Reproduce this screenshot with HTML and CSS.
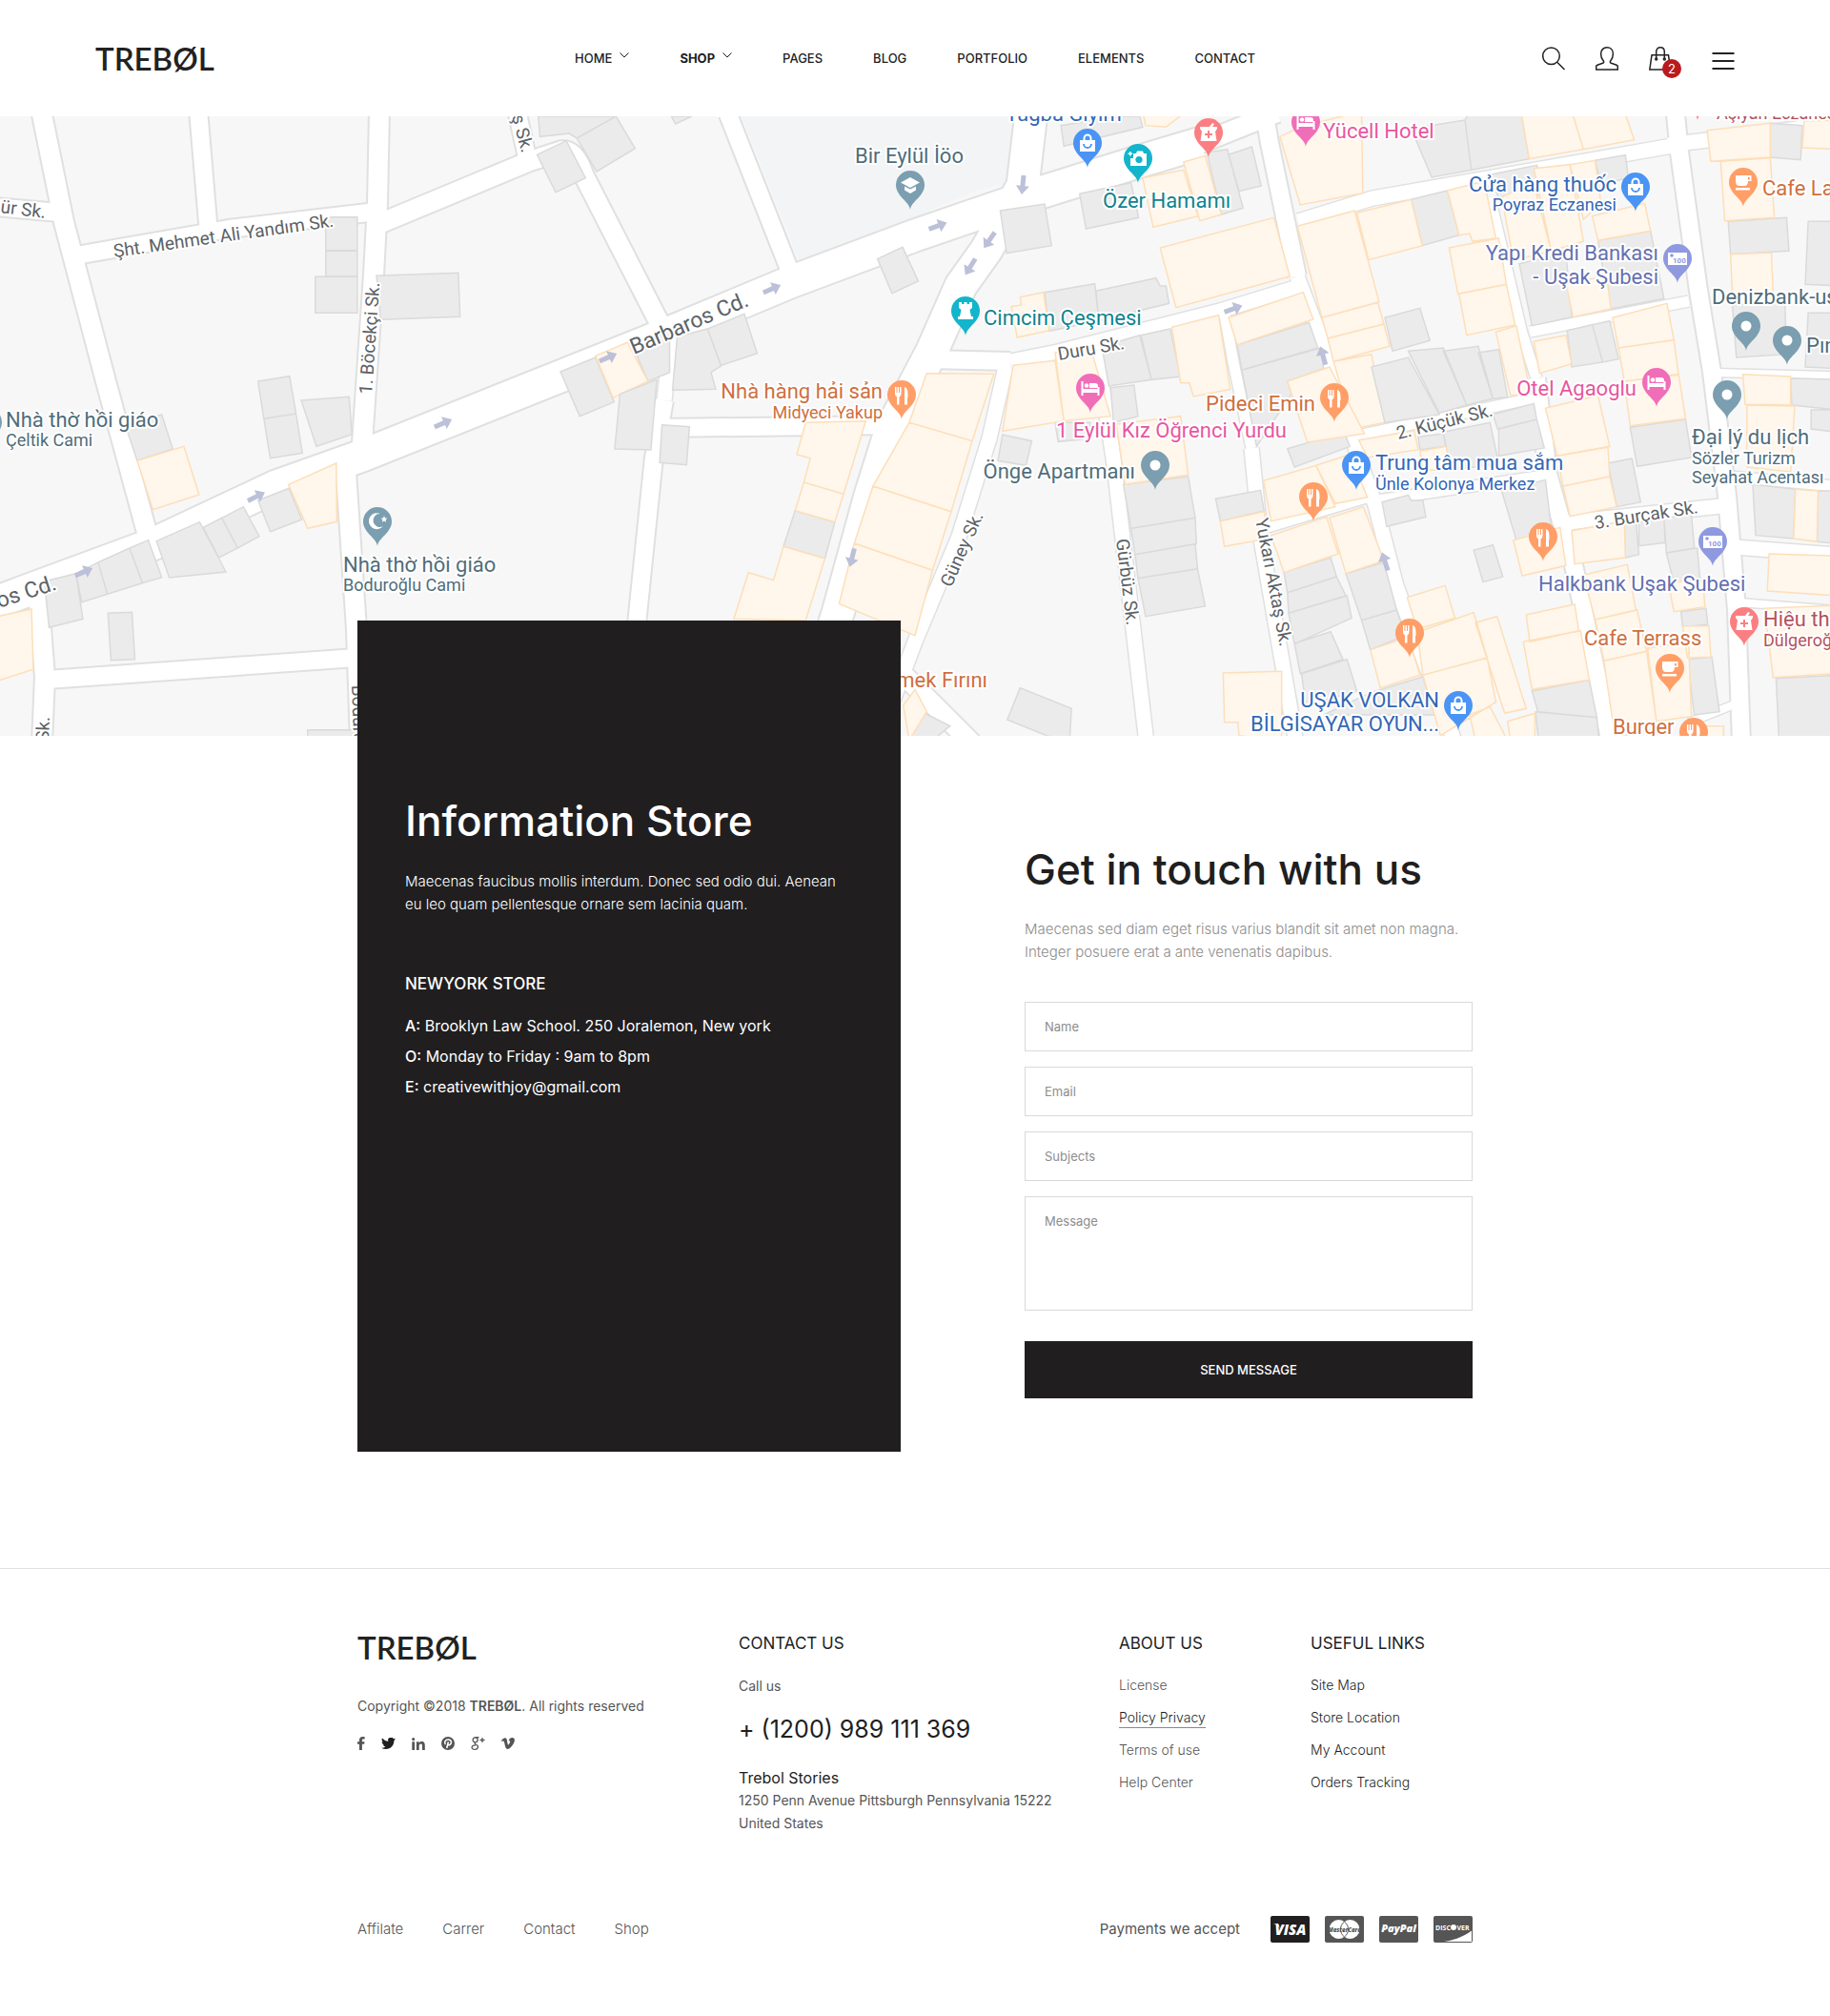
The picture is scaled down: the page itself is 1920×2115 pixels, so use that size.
FILE: index.html
```html
<!DOCTYPE html>
<html lang="en">
<head>
<meta charset="utf-8">
<meta name="viewport" content="width=device-width, initial-scale=1">
<title>Trebøl – Contact</title>
<link rel="stylesheet" href="styles.css">
</head>
<body>
<header class="site-header">
  <a class="logo" href="#">TREBØL</a>
  <nav class="main-nav" aria-label="Main">
    <a href="#">HOME <svg class="chevron" viewBox="0 0 10 6"><path d="M.5.5 5 5 9.500.5"/></svg></a>
    <a class="current" href="#">SHOP <svg class="chevron" viewBox="0 0 10 6"><path d="M.5.5 5 5 9.500.5"/></svg></a>
    <a href="#">PAGES</a>
    <a href="#">BLOG</a>
    <a href="#">PORTFOLIO</a>
    <a href="#">ELEMENTS</a>
    <a href="#">CONTACT</a>
  </nav>
  <div class="tools">
    <button type="button" aria-label="Search"><svg viewBox="0 0 24 25"><circle cx="9.500" cy="9.800" r="8.800"/><path d="m16 16.500 7.500 7.500"/></svg></button>
    <button type="button" aria-label="Account"><svg viewBox="0 0 24 25"><path d="M.7 24v-3.200c0-.8.500-1.300 1.200-1.600l5.600-1.900c1.300-.5 1.500-1.500.7-2.500C6.300 12.600 5.600 10 5.600 7.400 5.600 3.400 8.300.8 12 .8s6.400 2.600 6.400 6.600c0 2.600-.7 5.200-2.600 7.400-.8 1-.6 2 .7 2.500l5.600 1.900c.7.300 1.200.8 1.200 1.600V24z"/></svg></button>
    <button class="bag" type="button" aria-label="Cart"><svg viewBox="0 0 24 25"><path d="M.8 24 3 8.800h17.500L22.700 24zM7.700 12.500V5.300C7.700 2.600 9.400.8 12 .8s4.300 1.800 4.300 4.500v7.200"/><circle cx="7.700" cy="13" r="1"/><circle cx="16.300" cy="13" r="1"/></svg><span class="badge">2</span></button>
    <button class="menu" type="button" aria-label="Menu"><svg viewBox="0 0 24 25"><path d="M.5 7h23M.5 15h23M.5 23h23"/></svg></button>
  </div>
</header>

<main>
<section class="map" aria-label="Map">
<svg class="map-art" viewBox="0 122 1920 650" preserveAspectRatio="xMidYMid slice">
  <defs>
    <path id="drop" d="M0 0C-1-9-15-14-15-26a15 15 0 1 1 30 0C15-14 1-9 0 0Z"/>
    <path id="arrow" d="M-10-2.500H1V-7L10 0 1 7V2.500H-10Z"/>
    <g id="g-dot" fill="#fff"><circle cy="-26" r="5.500"/></g>
    <g id="g-food" fill="#fff"><path d="M-7-34h1.500v6h1v-6h1.500v6h1v-6H-.5v7q0 3-2 3.500v8h-2.500v-8q-2-.5-2-3.500zM3-34q3.500 1 3.500 7v4H6v7.500H3z"/></g>
    <g id="g-shop" fill="#fff"><path d="M-8-29H8v12H-8zM-4.500-29v-2a4.500 4.500 0 0 1 9 0v2h-2v-2a2.500 2.500 0 0 0-5 0v2z"/><path d="M-4-25a4 4 0 0 0 8 0" fill="none" stroke="#4a94f5" stroke-width="1.800"/></g>
    <g id="g-bed"><path fill="#fff" d="M-9.500-33h2v8h15v-2h2v9h-2v-3h-15v3h-2zM-1-31h6q3 0 3 3v2h-9z"/><circle cx="-4" cy="-28.500" r="2.300" fill="#fff"/></g>
    <g id="g-bank"><rect x="-10" y="-32" width="20" height="13" fill="#fff"/><circle cx="-6" cy="-29" r="1.800" fill="#8e99e0"/><text class="note" x="-5" y="-21">100</text></g>
    <g id="g-cup" fill="#fff"><path d="M-8-33H8.500v6H5q0 5-4 5h-5q-4 0-4-5zm13 2v2.500h1.800V-31zM-8-20H7v2.500H-8z"/></g>
    <g id="g-med"><path fill="#fff" d="M-9-32h10l3-4 2 1-2 3h5v2l-2 3 1.500 10h-17L-7-27l-2-3z"/><path d="M0-28v8M-4-24h8" stroke="#fb7f82" stroke-width="2"/></g>
    <g id="g-cam"><path fill="#fff" d="M-5-31h3l1-2.500h6l1 2.500h3v13H-8v-8h3zM-9-33v1.500h-1.500v1.500H-9v1.500h1.500V-30H-6v-1.500h-1.500V-33z"/><circle cx="1" cy="-24.500" r="3.600" fill="#12b5cb"/></g>
    <g id="g-rook" fill="#fff"><path d="M-7-35h3v2h2.500v-2h3v2H4v-2h3v6l-2.500 2 1.500 7h2v3H-8v-3h2l1.500-7L-7-29z"/></g>
    <g id="g-cap" fill="#fff"><path d="m0-34 10 5.500L0-23l-10-5.500zM-6-24.500l6 3 6-3v4l-6 3.500-6-3.500z"/></g>
    <g id="g-moon" fill="#fff"><path d="M3-34a8.500 8.500 0 1 0 3 13A7 7 0 1 1 3-34zM7-32l1 2.500 2.500.2-2 1.600.7 2.500L7-26.600l-2.200 1.400.7-2.500-2-1.600 2.500-.2z"/></g>
  </defs>
  <rect y="122" width="1920" height="650" fill="#f7f7f7"/>
  <path class="school" d="M778 122h288l-11 72q-20-2-95 34l-122 45z"/>

  <!-- streets: outline first, then the white surface -->
  <g class="outline">
    <g id="streets">
      <g class="w10"><path d="M1800 391 1925 394M1825 632 1925 640M1772 758 1822 738"/></g>
      <g class="w13"><path d="M1563 207 1597 350 1612 397M1420 458 1612 417M1605 348 1772 316M1445 525 1620 499M1330 553 1440 520M1815 500 1925 510M1284 325 1294 380 1313 470"/></g>
      <g class="w16"><path d="M1361 290 1395 380 1422 470 1443 530 1465 615 1527 780M1313 470 1322 560 1360 780M1150 366 1168 480 1203 780M1362 232 1440 208 1760 152M1750 152 1800 146 1925 130M1645 548 1805 531M1820 574 1925 582M1060 379 1110 369 1280 326 1365 300M1055 385 1038 460 1006 563 960 673 935 740M705 345 697 420"/></g>
      <g class="w19"><path d="M208 115 219 245M542 115 553 165M80 268 240 240 395 222M690 449 940 446M697 420 686 480 668 655M50 713 374 690M975 377 1060 379M-5 217 62 223M762 115 829 285M1612 397 1624 497 1652 597 1690 780M1325 110 1332 150 1361 290M1757 110 1762 160 1782 305 1796 390 1812 520 1822 640 1827 780"/></g>
      <g class="w22"><path d="M43 115 67 233 111 400 155 562M398 115 396 214 392 288 380 465M363 495 374 660 378 780M395 236 556 169 590 158Q604 158 612 183L695 345M40 620 47 710 44 780M945 705 1025 785"/></g>
      <g class="w34"><path d="M-10 634 30 619 160 571 290 510 380 478 590 394 695 352 829 296 960 247 1085 204 1200 168 1260 150M1083 110 1073 195 1035 262 1008 300 978 368 935 450 913 520 880 640 855 720"/></g>
      <g class="w22"><path d="M1230 162 1340 118"/></g>
    </g>
  </g>
  <use href="#streets" class="surface"/>

  <!-- building footprints, one tile per quarter of the map -->
  <g transform="scale(.6125 .33333)">
    <path class="grey" d="M922 366 1055 366 988 435 975 420 925 430ZM1055 366 1088 467 1022 540 988 435ZM920 487 970 443 1003 560 952 605ZM1150 366 1185 366 1157 390ZM558 683 612 683 612 788 558 788ZM558 790 612 790 612 870 558 870ZM540 871 612 871 612 985 540 985ZM645 868 785 859 788 997 652 1006ZM1503 815 1546 778 1573 885 1528 923ZM1212 1035 1275 988 1297 1112 1235 1150ZM1160 1060 1212 1035 1235 1152 1218 1172 1226 1225 1152 1228ZM1090 1115 1147 1030 1147 1172 1110 1200ZM960 1170 1020 1125 1052 1265 993 1310Z"/>
    <path class="tan" d="M1020 1120 1075 1078 1110 1200 1050 1252Z"/>
  </g>
  <g transform="translate(0 380) scale(.6125 .33333)">
    <path class="grey" d="M442 60 496 44 507 162 452 178ZM452 178 507 162 518 286 463 302ZM516 120 598 109 603 227 542 265ZM215 200 277 165 296 273 235 310ZM1062 100 1125 55 1115 276 1053 273ZM1134 197 1181 203 1176 323 1130 316ZM442 435 495 397 517 495 463 533ZM268 563 342 503 387 660 290 678ZM348 520 380 490 407 585 375 615ZM380 490 417 455 444 548 407 585ZM222 585 254 560 277 677 244 695ZM168 630 222 585 244 695 184 730ZM130 665 168 630 184 730 140 755ZM76 690 130 665 142 808 84 835ZM185 790 226 787 231 935 190 938ZM1362 467 1430 503 1413 618 1342 580ZM527 1157 612 1157 612 1190 527 1190Z"/>
    <path class="tan" d="M235 310 315 265 341 417 262 464ZM494 385 576 318 577 502 527 523ZM-9 802 54 777 57 967-9 1006ZM1380 190 1483 185 1445 415 1377 378 1388 302 1365 290ZM1377 378 1445 415 1430 503 1362 467ZM1342 580 1413 618 1380 813 1257 808 1282 662 1325 686Z"/>
  </g>
  <g transform="translate(960) scale(.6125 .33333)">
    <path class="grey" d="M250 395 345 366 385 366 390 400 255 460ZM500 480 535 470 562 655 525 675ZM537 487 577 462 593 585 555 602ZM282 610 370 575 383 685 293 720ZM146 663 222 642 234 773 157 797ZM850 405 942 378 953 535 885 558ZM942 378 950 350 1038 350 1052 500 953 535ZM1465 388 1520 395 1517 503 1465 495ZM1393 697 1493 685 1497 790 1397 800ZM1530 697 1580 697 1580 900 1525 895ZM1400 960 1490 950 1493 1115 1407 1125ZM1530 985 1580 985 1580 1160 1525 1155ZM850 628 912 600 932 740 869 773ZM985 550 1065 520 1080 610 1005 650ZM1165 505 1217 488 1222 560 1175 580ZM1170 757 1260 727 1283 940 1190 973ZM1035 830 1115 795 1125 998 1057 1025ZM805 1000 865 970 882 1072 818 1105ZM222 920 308 893 315 1010 230 1042ZM325 910 413 875 420 900 430 900 435 955 335 1000 315 1010 310 915ZM552 1085 675 1015 690 1095 560 1165Z"/>
    <path class="tan" d="M390 350 465 350 430 400 395 395ZM390 560 460 535 485 680 408 715ZM460 510 497 490 525 675 488 695ZM420 780 615 685 642 870 447 968ZM625 430 660 400 765 350 767 608 660 645ZM1038 350 1125 350 1145 470 1052 500ZM1125 350 1215 350 1232 440 1145 470ZM1357 410 1465 388 1465 495 1363 508ZM1523 380 1580 378 1580 470 1520 465ZM1380 508 1465 497 1472 685 1387 695ZM1397 800 1467 795 1470 930 1400 925ZM655 712 753 663 795 950 697 1000ZM757 670 850 628 869 773 777 818ZM912 600 975 570 995 750 955 760 950 735 932 740ZM1005 620 1060 580 1090 790 1025 820ZM1060 530 1122 518 1145 760 1090 790ZM1122 518 1165 505 1175 640 1145 690ZM1160 680 1250 640 1260 727 1170 757ZM1115 890 1185 870 1192 972 1127 998ZM915 780 1000 750 1013 895 930 925ZM932 925 1013 895 1028 1023 945 1055ZM697 1000 793 952 803 1020 707 1065ZM707 1065 803 1020 813 1090 717 1138ZM717 1138 782 1115 805 1330 750 1350ZM180 935 220 920 230 1040 175 1062 165 965 182 960ZM537 1000 665 920 682 1005 552 1085Z"/>
  </g>
  <g transform="translate(960 380) scale(.6125 .33333)">
    <path class="grey" d="M782 15 845-15 898 165 805 190ZM845-35 905-45 945 135 898 160ZM905-35 965-50 990 115 945 135ZM965-30 1000-40 1015 110 990 115ZM320-50 385-85 405 55 332 75ZM387-85 437-105 455 45 405 55ZM560 25 695-45 700 20 638 60 645 100 585 265ZM638 272 735 220 745 265 650 330ZM150 228 200 248 190 325 142 310ZM240 190 300 190 300 240 245 250ZM335 80 375 72 382 170 340 190ZM357 385 468 360 480 490 370 523ZM370 523 480 490 482 572 377 605ZM377 605 480 572 484 650 382 680ZM382 680 484 650 497 768 395 800ZM515 430 592 403 598 468 523 500ZM632 660 712 615 722 675 638 725ZM638 725 722 675 738 735 640 790ZM640 790 740 735 748 805 650 887ZM650 885 712 848 733 935 660 980ZM662 980 740 935 757 1035 670 1080ZM738 665 803 630 825 780 765 812ZM765 812 825 780 840 860 780 905ZM180 1025 268 1090 265 1190 225 1175 158 1125ZM-10 1080 60 1145 30 1190-10 1190ZM800 440 845 418 850 435 870 435 875 487 808 517ZM957 592 990 575 1007 675 973 692ZM1005 405 1080 370 1090 525 1030 560ZM862 235 905 225 910 265 865 275ZM905 220 985 190 1000 320 915 340ZM1000 210 1065 180 1078 270 1000 295ZM990 165 1060 130 1065 180 998 210ZM1117-100 1160-118 1178 0 1125 15ZM1160-118 1190-130 1205-10 1178 0ZM1225 205 1320 180 1330 300 1237 328ZM1187 318 1228 303 1243 440 1202 455ZM1215 510 1235 505 1240 605 1217 615ZM1240 505 1283 490 1285 568 1240 578ZM1283 490 1330 480 1335 585 1287 600ZM1287 600 1340 585 1345 690 1300 695ZM1312 785 1355 775 1358 825 1315 833ZM1323 935 1365 928 1378 1100 1335 1110ZM1057 1035 1155 1000 1168 1118 1067 1100ZM1063 1100 1168 1118 1172 1190 1068 1190ZM1500 50 1580 55 1580 150 1502 135ZM1535 150 1580 150 1580 220 1535 210ZM1435 385 1508 400 1505 555 1440 545ZM1547 405 1580 405 1580 570 1545 565ZM1475 995 1580 985 1580 1190 1480 1190ZM780 1040 870 990 890 1110 700 1110Z"/>
    <path class="tan" d="M995-95 1030-115 1055 100 1020 105ZM168 10 240-5 255 185 150 217ZM240-30 300-50 335 170 255 185ZM440-110 520-148 540 85 477 108 470 65 455 65ZM638 60 710 15 770 225 672 252ZM20 35 135 37 98 248-10 190ZM-10 190 98 248 62 470-72 390ZM-72 390 62 470 30 655-104 570ZM-104 570 30 655 0 860-130 760ZM345 195 455 170 468 355 360 385ZM523 500 598 470 605 555 530 580ZM597 373 687 325 720 455 610 500ZM687 325 745 290 775 425 720 445ZM610 545 705 487 725 603 632 662ZM710 490 768 455 803 625 738 665ZM780 905 845 865 865 985 797 1025ZM843 740 908 703 925 805 860 840ZM860 850 957 788 980 930 870 985ZM960 820 997 800 1047 1090 1010 1105ZM870 985 980 930 995 1070 900 1175ZM950 1110 985 1085 1015 1190 960 1190ZM1015 1130 1062 1105 1062 1190 1020 1190ZM528 978 628 973 628 1190 555 1175 553 1133 530 1133ZM1025 560 1105 520 1115 640 1040 672ZM760 245 855 215 862 275 775 300ZM865 280 910 265 915 340 870 340ZM1060-65 1115-85 1125 5 1070 35ZM1195-140 1288-185 1300-70 1205-45ZM1205-45 1300-70 1308 40 1215 60ZM1080 145 1170 105 1190 265 1100 295ZM1100 295 1187 268 1190 360 1110 390ZM1110 390 1190 360 1202 455 1122 485ZM1215 60 1308 38 1320 178 1225 200ZM1125 530 1215 500 1217 615 1130 635ZM1290 690 1350 690 1353 770 1300 785ZM1145 670 1220 637 1235 780 1165 810ZM1165 810 1237 780 1253 910 1180 940ZM1180 940 1253 910 1270 1130 1200 1190ZM1255 900 1325 880 1330 1115 1270 1130ZM1315 830 1360 830 1363 928 1323 930ZM1047 795 1130 762 1137 845 1053 880ZM1042 880 1140 845 1155 1000 1057 1030ZM1418 38 1500 45 1500 135 1422 133ZM1425 135 1507 138 1500 345 1425 330ZM1508 400 1547 405 1545 565 1505 555ZM1463 603 1580 610 1580 735 1460 720ZM1455 775 1580 765 1580 980 1470 992ZM1340 1145 1385 1145 1385 1190 1340 1190ZM-20 1080 0 1030 20 1100-10 1190Z"/>
  </g>

  <g class="arrows">
    <use href="#arrow" transform="translate(810 303) rotate(-24)"/>
    <use href="#arrow" transform="translate(638 375) rotate(-24)"/>
    <use href="#arrow" transform="translate(465 444) rotate(-24)"/>
    <use href="#arrow" transform="translate(269 521) rotate(-26)"/>
    <use href="#arrow" transform="translate(88 600) rotate(-24)"/>
    <use href="#arrow" transform="translate(984 237) rotate(-20)"/>
    <use href="#arrow" transform="translate(1073 194) rotate(96)"/>
    <use href="#arrow" transform="translate(1038 252) rotate(125)"/>
    <use href="#arrow" transform="translate(1018 280) rotate(122)"/>
    <use href="#arrow" transform="translate(1294 324) rotate(-20)"/>
    <use href="#arrow" transform="translate(1388 373) rotate(-106)"/>
    <use href="#arrow" transform="translate(1453 589) rotate(-108)"/>
    <use href="#arrow" transform="translate(894 585) rotate(104)"/>
  </g>

  <g class="street-names">
    <text transform="translate(120 270) rotate(-8)">Şht. Mehmet Ali Yandım Sk.</text>
    <text transform="translate(0 223) rotate(7)">ür Sk.</text>
    <text transform="translate(537 122) rotate(75)">ş Sk.</text>
    <text transform="translate(390 414) rotate(-86)">1. Böcekçi Sk.</text>
    <text class="avenue" transform="translate(665 372) rotate(-23)">Barbaros Cd.</text>
    <text class="avenue" transform="translate(-1 638) rotate(-18)">os Cd.</text>
    <text transform="translate(51 778) rotate(-88)">Sk.</text>
    <text transform="translate(369 719) rotate(88)">Boduroğlu</text>
    <text transform="translate(1111 378) rotate(-10)">Duru Sk.</text>
    <text transform="translate(1467 461) rotate(-14)">2. Küçük Sk.</text>
    <text transform="translate(1674 555) rotate(-9)">3. Burçak Sk.</text>
    <text transform="translate(998 617) rotate(-66)">Güney Sk.</text>
    <text transform="translate(1171 566) rotate(83)">Gürbüz Sk.</text>
    <text transform="translate(1317 545) rotate(79)">Yukarı Aktaş Sk.</text>
    <text transform="translate(752 118) rotate(70)">.</text>
  </g>

  <g class="pins">
    <g transform="translate(955 220)"><use href="#drop" fill="#7b9eb0"/><use href="#g-cap"/></g>
    <g transform="translate(1141 176)"><use href="#drop" fill="#4a94f5"/><use href="#g-shop"/></g>
    <g transform="translate(1194 192)"><use href="#drop" fill="#12b5cb"/><use href="#g-cam"/></g>
    <g transform="translate(1268 165)"><use href="#drop" fill="#fb7f82"/><use href="#g-med"/></g>
    <g transform="translate(1370 154)"><use href="#drop" fill="#f06eb8"/><use href="#g-bed"/></g>
    <g transform="translate(1781 126)"><use href="#drop" fill="#fb7f82"/></g>
    <g transform="translate(1716 222)"><use href="#drop" fill="#4a94f5"/><use href="#g-shop"/></g>
    <g transform="translate(1829 217)"><use href="#drop" fill="#ff9e67"/><use href="#g-cup"/></g>
    <g transform="translate(1760 297)"><use href="#drop" fill="#8e99e0"/><use href="#g-bank"/></g>
    <g transform="translate(1013 352)"><use href="#drop" fill="#12b5cb"/><use href="#g-rook"/></g>
    <g transform="translate(1832 368)"><use href="#drop" fill="#7b9eb0"/><use href="#g-dot"/></g>
    <g transform="translate(1875 383)"><use href="#drop" fill="#7b9eb0"/><use href="#g-dot"/></g>
    <g transform="translate(396 573)"><use href="#drop" fill="#7b9eb0"/><use href="#g-moon"/></g>
    <g transform="translate(-13 469)"><use href="#drop" fill="#7b9eb0"/></g>
    <g transform="translate(946 440)"><use href="#drop" fill="#ff9e67"/><use href="#g-food"/></g>
    <g transform="translate(1144 433)"><use href="#drop" fill="#f06eb8"/><use href="#g-bed"/></g>
    <g transform="translate(1212 514)"><use href="#drop" fill="#7b9eb0"/><use href="#g-dot"/></g>
    <g transform="translate(1400 443)"><use href="#drop" fill="#ff9e67"/><use href="#g-food"/></g>
    <g transform="translate(1423 514)"><use href="#drop" fill="#4a94f5"/><use href="#g-shop"/></g>
    <g transform="translate(1378 547)"><use href="#drop" fill="#ff9e67"/><use href="#g-food"/></g>
    <g transform="translate(1619 589)"><use href="#drop" fill="#ff9e67"/><use href="#g-food"/></g>
    <g transform="translate(1479 690)"><use href="#drop" fill="#ff9e67"/><use href="#g-food"/></g>
    <g transform="translate(1530 766)"><use href="#drop" fill="#4a94f5"/><use href="#g-shop"/></g>
    <g transform="translate(1797 594)"><use href="#drop" fill="#8e99e0"/><use href="#g-bank"/></g>
    <g transform="translate(1830 678)"><use href="#drop" fill="#fb7f82"/><use href="#g-med"/></g>
    <g transform="translate(1752 727)"><use href="#drop" fill="#ff9e67"/><use href="#g-cup"/></g>
    <g transform="translate(1777 794)"><use href="#drop" fill="#ff9e67"/><use href="#g-food"/></g>
    <g transform="translate(1738 427)"><use href="#drop" fill="#f06eb8"/><use href="#g-bed"/></g>
    <g transform="translate(1812 440)"><use href="#drop" fill="#7b9eb0"/><use href="#g-dot"/></g>
  </g>

  <g class="places">
    <g class="slate">
      <text x="897" y="171">Bir Eylül İöo</text>
      <text x="6" y="448">Nhà thờ hồi giáo</text><text class="sub" x="6" y="468">Çeltik Cami</text>
      <text x="360" y="600">Nhà thờ hồi giáo</text><text class="sub" x="360" y="620">Boduroğlu Cami</text>
      <text class="end" x="1191" y="502">Önge Apartmanı</text>
      <text x="1796" y="319">Denizbank-us</text>
      <text x="1895" y="370">Pın</text>
      <text x="1775" y="466">Đại lý du lịch</text><text class="sub" x="1775" y="487">Sözler Turizm</text><text class="sub" x="1775" y="507">Seyahat Acentası</text>
    </g>
    <g class="blue">
      <text x="1055" y="127">Tuğba Giyim</text>
      <text class="end" x="1696" y="201">Cửa hàng thuốc</text><text class="sub end" x="1696" y="221">Poyraz Eczanesi</text>
      <text x="1443" y="493">Trung tâm mua sắm</text><text class="sub" x="1443" y="514">Ünle Kolonya Merkez</text>
      <text class="end" x="1510" y="742">UŞAK VOLKAN</text><text class="end" x="1510" y="767">BİLGİSAYAR OYUN...</text>
    </g>
    <g class="pink">
      <text x="1388" y="145">Yücell Hotel</text>
      <text x="1108" y="459">1 Eylül Kız Öğrenci Yurdu</text>
      <text class="end" x="1717" y="415">Otel Agaoglu</text>
    </g>
    <g class="teal">
      <text x="1157" y="218">Özer Hamamı</text>
      <text x="1032" y="341">Cimcim Çeşmesi</text>
    </g>
    <g class="orange">
      <text class="end" x="926" y="418">Nhà hàng hải sản</text><text class="sub end" x="926" y="439">Midyeci Yakup</text>
      <text class="end" x="1380" y="431">Pideci Emin</text>
      <text x="1849" y="205">Cafe La</text>
      <text x="1662" y="677">Cafe Terrass</text>
      <text x="1692" y="770">Burger</text>
      <text class="end" x="1036" y="721">Ekmek Fırını</text>
    </g>
    <g class="violet">
      <text class="end" x="1740" y="273">Yapı Kredi Bankası</text><text class="end" x="1740" y="298">- Uşak Şubesi</text>
      <text x="1614" y="620">Halkbank Uşak Şubesi</text>
    </g>
    <g class="red">
      <text class="sub" x="1801" y="125">Aşiyan Eczanesi</text>
      <text x="1850" y="657">Hiệu th</text><text class="sub" x="1850" y="678">Dülgeroğ</text>
    </g>
  </g>
</svg>
</section>

<div class="contact container">
  <section class="store-card">
    <h2>Information Store</h2>
    <p>Maecenas faucibus mollis interdum. Donec sed odio dui. Aenean eu leo quam pellentesque ornare sem lacinia quam.</p>
    <h3>NEWYORK STORE</h3>
    <ul>
      <li><b>A:</b> Brooklyn Law School. 250 Joralemon, New york</li>
      <li><b>O:</b> Monday to Friday : 9am to 8pm</li>
      <li><b>E:</b> creativewithjoy@gmail.com</li>
    </ul>
  </section>
  <section class="touch">
    <h2>Get in touch with us</h2>
    <p>Maecenas sed diam eget risus varius blandit sit amet non magna. Integer posuere erat a ante venenatis dapibus.</p>
    <form>
      <input type="text" aria-label="Name" placeholder="Name">
      <input type="email" aria-label="Email" placeholder="Email">
      <input type="text" aria-label="Subjects" placeholder="Subjects">
      <textarea aria-label="Message" placeholder="Message"></textarea>
      <button type="submit">SEND MESSAGE</button>
    </form>
  </section>
</div>
</main>

<footer class="site-footer">
  <div class="container footer-cols">
    <div class="brand">
      <a class="logo" href="#">TREBØL</a>
      <p>Copyright ©2018 <b>TREBØL</b>. All rights reserved</p>
      <div class="social">
        <a href="#" aria-label="Facebook"><svg width="8" height="14" viewBox="0 0 8 14"><path d="M2 14V7.800H0V5.200h2V3.500C2 1.200 3.200 0 5.400 0H7.600v2.500H6.200c-1 0-1.300.4-1.300 1.200v1.500h2.600l-.3 2.600H4.900V14z"/></svg></a>
        <a class="on" href="#" aria-label="Twitter"><svg width="15" height="12" viewBox="0 0 15 12"><path d="M15 1.500q-.8.300-1.600.5.900-.6 1.200-1.600-.8.500-1.900.7A3 3 0 0 0 7.400 3.900Q3.500 3.700 1 .600C.2 2 .7 3.700 2 4.600q-.7 0-1.400-.4c0 1.500 1 2.700 2.500 3.100q-.7.200-1.400 0c.4 1.200 1.500 2.100 2.900 2.100Q2.600 11 0 10.700 2.200 12 4.700 12c5.700 0 8.900-4.700 8.700-8.900q1-.7 1.600-1.600z"/></svg></a>
        <a href="#" aria-label="LinkedIn"><svg width="14" height="13" viewBox="0 0 14 13"><path d="M.3 4.300h2.800V13H.3zM1.700 0a1.600 1.600 0 1 1 0 3.200 1.600 1.600 0 0 1 0-3.200zM4.900 4.300h2.700v1.200C8.100 4.600 9 4 10.300 4c2.900 0 3.500 1.900 3.500 4.300V13H11V8.800c0-1 0-2.400-1.400-2.400S7.700 7.500 7.700 8.700V13H4.900z"/></svg></a>
        <a href="#" aria-label="Pinterest"><svg width="14" height="14" viewBox="0 0 14 14"><circle cx="7" cy="7" r="7"/><path class="cut" d="M4.300 8C2.600 5.500 4.500 3 7.200 3c2.400 0 3.600 1.700 3.100 3.700-.4 1.900-2.500 2.700-3.400 1.500M7.400 5.500 5.700 12"/></svg></a>
        <a href="#" aria-label="Google Plus"><svg width="15" height="14" viewBox="0 0 15 14"><path class="line" d="M8.500.7H5.300C1.500.7 1 5.400 4.300 5.800 8 6.200 8 1.200 5 .8M5 5.900c-1.700.9-.6 1.900.8 2.600 3 1.500 1.800 4.800-1.600 4.800-4.200 0-4.400-4.100.8-4.400M12 1v5M9.500 3.500h5"/></svg></a>
        <a href="#" aria-label="Vimeo"><svg width="14" height="12" viewBox="0 0 14 12"><path d="M0 2.900C1.500 1.500 2.700.3 3.900.3 5.200.2 5.700 1.600 6 3c.4 2.200.7 4.600 1.200 4.600.6 0 2-2.600 2-3.600 0-.9-.7-1-1.500-.7C8.300 1.100 9.700 0 11.500 0c2 0 2.700 1.500 2.300 3.400-.6 3.200-4.900 8.600-7.300 8.600-2.200 0-2.600-3.500-3.300-6.400-.4-1.800-.7-2.500-2.500-1.600z"/></svg></a>
      </div>
    </div>
    <div class="reach">
      <h4>CONTACT US</h4>
      <p>Call us</p>
      <a class="phone" href="tel:+1200989111369">+ (1200) 989 111 369</a>
      <h5>Trebol Stories</h5>
      <p>1250 Penn Avenue Pittsburgh Pennsylvania 15222<br>United States</p>
    </div>
    <nav class="links" aria-label="About us">
      <h4>ABOUT US</h4>
      <a href="#">License</a>
      <a class="on" href="#">Policy Privacy</a>
      <a href="#">Terms of use</a>
      <a href="#">Help Center</a>
    </nav>
    <nav class="links dark" aria-label="Useful links">
      <h4>USEFUL LINKS</h4>
      <a href="#">Site Map</a>
      <a href="#">Store Location</a>
      <a href="#">My Account</a>
      <a href="#">Orders Tracking</a>
    </nav>
  </div>
  <div class="container footer-base">
    <nav class="base-links" aria-label="Footer">
      <a href="#">Affilate</a><a href="#">Carrer</a><a href="#">Contact</a><a href="#">Shop</a>
    </nav>
    <div class="payments">
      <span>Payments we accept</span>
      <svg viewBox="0 0 41 28"><rect width="41" height="28" rx="2" fill="#201e1f"/><text class="visa" x="21" y="20">VISA</text><path d="M3 8h5l2 5q-2-4-7-5z" fill="#fff"/></svg>
      <svg viewBox="0 0 41 28"><rect width="41" height="28" rx="2" fill="#555"/><circle cx="14.500" cy="14" r="10" fill="#fff"/><circle cx="26.500" cy="14" r="10" fill="#fff"/><path d="M20.500 6a10 10 0 0 1 0 16M20.500 6a10 10 0 0 0 0 16" fill="none" stroke="#555"/><text class="master" x="20.500" y="16.500">MasterCard</text></svg>
      <svg viewBox="0 0 41 28"><rect width="41" height="28" rx="2" fill="#555"/><text class="paypal" x="20.500" y="17">PayPal</text></svg>
      <svg viewBox="0 0 41 28"><rect width="41" height="28" rx="2" fill="#555"/><path d="M11 27Q29 24 40 15.500V27z" fill="#fff"/><circle cx="21" cy="12" r="3" fill="#fff"/><text class="discover" x="10" y="15">DISC</text><text class="discover" x="31" y="15">VER</text></svg>
    </div>
  </div>
</footer>
</body>
</html>
```

FILE: styles.css
```css
* { box-sizing: border-box; }
body {
  margin: 0;
  background: #fff;
  color: #201e1f;
  font-family: Inter, "Open Sans", sans-serif;
  font-size: 14px;
  line-height: 24px;
}
h2, h3, h4, h5, p, ul { margin: 0; padding: 0; font-weight: 400; }
a { color: inherit; text-decoration: none; }
button { border: 0; padding: 0; background: none; font: inherit; color: inherit; cursor: pointer; }
.container { width: 100%; max-width: 1170px; margin: 0 auto; }
.logo { font: 600 33px/40px Lato, sans-serif; color: #222; }

/* header */
.site-header {
  display: grid;
  grid-template-columns: 1fr auto 1fr;
  align-items: center;
  height: 122px;
  padding: 0 100px;
}
.main-nav { display: flex; gap: 53px; font-size: 13px; font-weight: 500; }
.main-nav a { display: flex; gap: 8px; }
.main-nav .current { font-weight: 700; }
.chevron { width: 10px; height: 6px; margin-top: 6px; fill: none; stroke: #201e1f; stroke-width: 1; }
.tools { display: flex; justify-content: flex-end; gap: 32px; }
.tools button { position: relative; height: 25px; }
.tools svg { display: block; width: 24px; height: 25px; fill: none; stroke: #222; stroke-width: 1.500; }
.tools .menu { margin-left: 10px; }
.tools .menu svg { stroke-width: 2; }
.badge {
  position: absolute;
  left: 14px;
  top: 13px;
  width: 20px;
  height: 20px;
  border-radius: 50%;
  background: #bb1a1d;
  color: #fff;
  font-size: 13px;
  line-height: 20px;
}

/* map */
.map-art { display: block; width: 100%; height: 650px; }
.school { fill: #f2f4f6; }
.outline, .surface { fill: none; stroke-linejoin: round; }
.outline { stroke: #e0e0e0; }
.surface { stroke: #fff; }
.w10 { stroke-width: var(--w10); }
.w13 { stroke-width: var(--w13); }
.w16 { stroke-width: var(--w16); }
.w19 { stroke-width: var(--w19); }
.w22 { stroke-width: var(--w22); }
.w34 { stroke-width: var(--w34); }
.outline { --w10: 11px; --w13: 14px; --w16: 18px; --w19: 22px; --w22: 24px; --w34: 37px; }
.surface { --w10: 8px; --w13: 11px; --w16: 15px; --w19: 18px; --w22: 20px; --w34: 33px; }
.grey, .tan { stroke-width: 1.500px; vector-effect: non-scaling-stroke; }
.grey { fill: #ebebeb; stroke: #dadada; }
.tan { fill: #fff6ec; stroke: #fddfb8; }
.arrows { fill: #bcc0d8; }
.map-art text { font-family: Roboto, sans-serif; }
.street-names, .places { stroke: #fff; stroke-width: 4px; stroke-linejoin: round; paint-order: stroke; }
.street-names { font-size: 19px; font-weight: 400; fill: #5c6266; }
.street-names .avenue { font-size: 23px; }
.places { font-size: 22px; }
.places .sub { font-size: 18px; }
.places .end { text-anchor: end; }
.slate { fill: #4f6d7a; }
.blue { fill: #3367b5; }
.pink { fill: #e8569f; }
.teal { fill: #0e838f; }
.orange { fill: #cf6f3e; }
.violet { fill: #6470b0; }
.red { fill: #b4525c; }
.note { font-size: 8px; font-weight: 700; fill: #8e99e0; }

/* store card and form */
.contact {
  display: grid;
  grid-template-columns: 570px 470px;
  justify-content: space-between;
  align-items: start;
}
.store-card {
  position: relative;
  min-height: 872px;
  margin-top: -121px;
  padding: 180px 50px 50px;
  background: #201e1f;
  color: #fff;
}
.contact h2 { font-size: 44px; font-weight: 500; line-height: 60px; }
.contact p { font-size: 15px; font-weight: 300; }
.store-card p { max-width: 460px; margin-top: 22px; }
.store-card h3 { margin-top: 59px; font-size: 17px; font-weight: 500; line-height: 24px; }
.store-card ul { margin-top: 16px; list-style: none; font-size: 16px; line-height: 32px; }
.store-card b { font-weight: 500; }
.touch { padding-top: 110px; }
.touch p { margin-top: 21px; color: #8d8d8d; }
form { display: grid; gap: 16px; margin-top: 40px; }
form input, form textarea {
  display: block;
  width: 100%;
  height: 52px;
  padding: 0 20px;
  border: 1px solid #d9d9d9;
  border-radius: 0;
  background: #fff;
  color: #201e1f;
  font: 400 13px/24px Inter, sans-serif;
}
form textarea { height: 120px; padding: 13px 20px; resize: none; }
form ::placeholder { color: #8d8d8d; opacity: 1; }
form button { height: 60px; margin-top: 16px; background: #201e1f; color: #fff; font-weight: 500; font-size: 13px; }

/* footer */
.site-footer { margin-top: 122px; padding: 66px 0 80px; border-top: 1px solid #e1e1e1; }
.footer-cols { display: grid; grid-template-columns: 400px 399px 201px 1fr; color: #555; font-weight: 300; }
.footer-cols h4 { color: #201e1f; font-size: 17px; font-weight: 400; line-height: 24px; }
.brand .logo { display: block; margin-top: -4px; }
.brand p { margin-top: 30px; font-weight: 400; }
.brand b { font-weight: 600; }
.social { display: flex; align-items: center; gap: 17px; height: 14px; margin-top: 20px; fill: #555; }
.social svg { display: block; }
.social .on { fill: #201e1f; }
.social .cut { fill: none; stroke: #fff; stroke-width: 1.600; }
.social .line { fill: none; stroke: #555; stroke-width: 1.300; }
.reach p:first-of-type { margin-top: 21px; }
.phone { display: block; margin-top: 17px; color: #201e1f; font-size: 25px; font-weight: 400; line-height: 32px; }
.reach h5 { margin-top: 23px; color: #201e1f; font-size: 16px; font-weight: 400; line-height: 24px; }
.links { display: flex; flex-direction: column; align-items: flex-start; gap: 14px; line-height: 20px; }
.links h4 { margin-bottom: 8px; }
.links .on { color: #201e1f; border-bottom: 1px solid #888; margin-bottom: -1px; }
.dark { color: #201e1f; }
.footer-base { display: flex; justify-content: space-between; align-items: center; margin-top: 85px; color: #555; font-size: 15px; }
.base-links { display: flex; gap: 41px; font-weight: 300; }
.payments { display: flex; align-items: center; gap: 16px; }
.payments span { margin-right: 16px; }
.payments svg { display: block; width: 41px; height: 28px; }
.payments text { fill: #fff; text-anchor: middle; font-family: "Open Sans", sans-serif; font-weight: 800; font-style: italic; }
.payments .visa { font-size: 15px; }
.payments .master { font-size: 6px; fill: #555; }
.payments .paypal { font-size: 11px; }
.payments .discover { font-size: 7px; font-style: normal; font-weight: 700; }
```
